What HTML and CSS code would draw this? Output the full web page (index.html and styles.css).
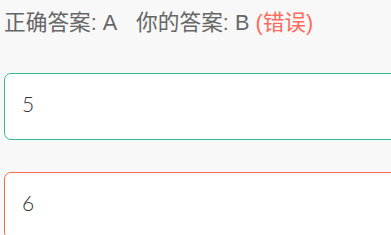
FILE: index.html
```html
<!DOCTYPE html>
<html lang="zh-cn">
	<head>
		<meta http-equiv="Content-Type" content="text/html; charset=utf-8" />
		<title></title>
		<link rel="stylesheet" href="styles.css">
	</head>
	<body>
		<div class="answer">
			<span>正确答案: A</span>
			<span class="mine">你的答案: B <em class="wrong">(错误)</em></span>
		</div>
		<ul class="options">
			<li class="option right">5</li>
			<li class="option error">6</li>
		</ul>
	</body>
</html>
```
FILE: styles.css
```css
*{
	padding:0;
	margin:0;
	list-style: none;
	box-sizing: border-box;
}
html, body {
	background-color: #f8f8f8;
	overflow: hidden;
}
body {
	padding: 8px 0 0 4px;
}
.answer {
	font-family: "Liberation Sans", "Noto Sans CJK SC", sans-serif;
	font-size: 21.7px;
	line-height: 30px;
	color: #666;
	white-space: nowrap;
}
.mine {
	margin-left: 14px;
}
.wrong {
	font-style: normal;
	color: #fc6b5c;
}
.options {
	margin-top: 35px;
	width: 420px;
}
.option {
	height: 67px;
	background-color: #fff;
	border: 1px solid #ccc;
	border-radius: 7px;
	padding: 0 0 0 17px;
	font-family: "Lato", sans-serif;
	font-weight: 300;
	font-size: 21px;
	line-height: 60px;
	color: #333;
	margin-bottom: 32px;
}
.right {
	border-color: #36b896;
}
.error {
	border-color: #f86a50;
}
```
